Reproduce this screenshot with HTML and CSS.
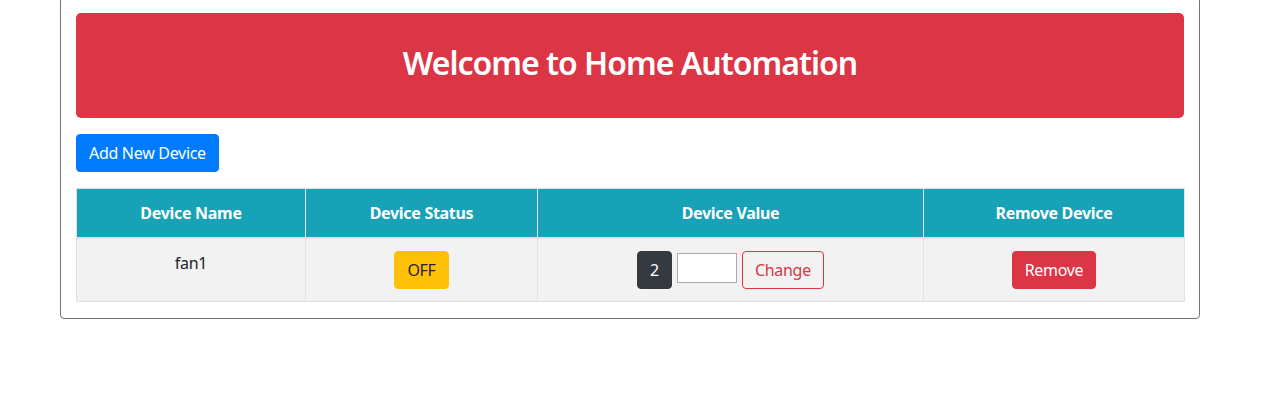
FILE: index.html
```html
<!DOCTYPE html>
<html lang="en">
<head>
<meta charset="utf-8">
<title>Home Automation</title>
<link rel="stylesheet" href="styles.css">
</head>
<body>
<div class="container">
  <div class="jumbotron">
    <h1 class="title">Welcome to Home Automation</h1>
  </div>
  <button class="btn btn-primary add-btn">Add New Device</button>
  <table class="devices">
    <thead>
      <tr>
        <th class="col-name">Device Name</th>
        <th class="col-status">Device Status</th>
        <th class="col-value">Device Value</th>
        <th class="col-remove">Remove Device</th>
      </tr>
    </thead>
    <tbody>
      <tr>
        <td>fan1</td>
        <td><button class="btn btn-warning">OFF</button></td>
        <td>
          <div class="value-group">
            <button class="btn btn-dark">2</button>
            <input class="value-input" type="text">
            <button class="btn btn-outline-danger">Change</button>
          </div>
        </td>
        <td><button class="btn btn-danger">Remove</button></td>
      </tr>
    </tbody>
  </table>
</div>
</body>
</html>
```

FILE: styles.css
```css
* { box-sizing: border-box; }
html, body { margin: 0; padding: 0; background: #fff; }
body {
  font-family: "Noto Sans", "Open Sans", "Liberation Sans", sans-serif;
  font-size: 16px;
  line-height: 1.5;
  color: #212529;
  letter-spacing: -0.3px;
}
.container {
  width: 1140px;
  margin: -3px 0 0 60px;
  padding: 15px 15px 16px;
  border: 1px solid #6c757d;
  border-radius: 4px;
}
.jumbotron {
  background: #dc3545;
  border-radius: 5px;
  height: 105px;
  display: flex;
  align-items: center;
  justify-content: center;
  padding-bottom: 4px;
  margin-bottom: 16px;
}
.title {
  margin: 0;
  color: #fff;
  font-size: 32px;
  font-weight: 600;
  line-height: 1.2;
  letter-spacing: -1px;
}
.btn {
  display: inline-block;
  font-family: inherit;
  font-size: 16px;
  letter-spacing: -0.3px;
  line-height: 24px;
  padding: 6px 12px;
  border: 1px solid transparent;
  border-radius: 4px;
  cursor: pointer;
  vertical-align: middle;
}
.btn-primary { background: #007bff; border-color: #007bff; color: #fff; }
.btn-warning { background: #ffc107; border-color: #ffc107; color: #212529; }
.btn-dark { background: #343a40; border-color: #343a40; color: #fff; }
.btn-danger { background: #dc3545; border-color: #dc3545; color: #fff; }
.btn-outline-danger { background: transparent; border-color: #dc3545; color: #dc3545; }
.add-btn { display: block; margin-bottom: 16px; }
.devices {
  width: 100%;
  border-collapse: collapse;
  table-layout: fixed;
}
.devices th, .devices td {
  border: 1px solid #dee2e6;
  padding: 12px;
  text-align: center;
  vertical-align: top;
}
.devices th {
  background: #17a2b8;
  color: #fff;
  font-weight: 700;
  border-bottom-width: 2px;
}
.devices tbody td { background: #f2f2f2; }
.col-name { width: 229px; }
.col-status { width: 232px; }
.col-value { width: 386px; }
.col-remove { width: 261px; }
.value-group {
  display: flex;
  justify-content: center;
  align-items: flex-start;
  gap: 5px;
}
.value-input {
  width: 60px;
  height: 30px;
  margin-top: 2px;
  border: 1px solid #aaa;
  background: #fff;
  padding: 2px 4px;
  font-family: inherit;
}
```
